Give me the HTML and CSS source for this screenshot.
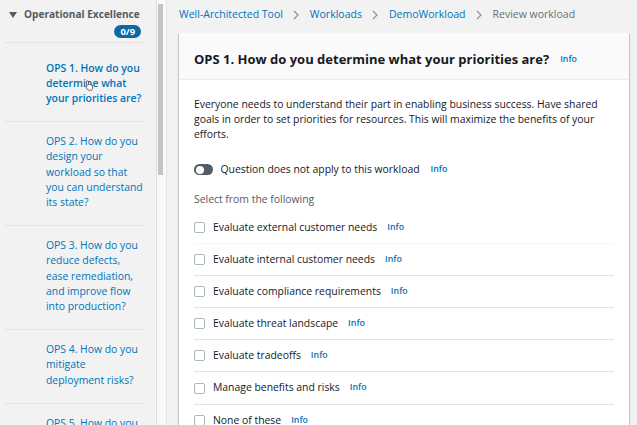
FILE: index.html
```html
<!DOCTYPE html>
<html lang="en">
<head>
<meta charset="utf-8">
<title>Review workload</title>
<link rel="stylesheet" href="styles.css">
</head>
<body>
<div class="app">
  <aside class="nav">
    <div class="nav-head">
      <div class="nav-title">
        <svg class="caret" width="8" height="6" viewBox="0 0 8 6"><polygon points="0,0 8,0 4,6" fill="#545b64"/></svg>
        <span>Operational Excellence</span>
      </div>
      <div class="badge-row"><span class="badge">0/9</span></div>
    </div>
    <a class="nav-item first active">OPS 1. How do you determine what your priorities are?
      <svg class="cursor" width="9" height="11" viewBox="0 0 9 11"><path d="M2.5 0.8 C3.2 0.8 3.5 1.2 3.5 1.8 V4.6 C3.9 4.3 4.6 4.4 4.9 4.8 C5.3 4.5 6 4.6 6.3 5.1 C6.8 4.9 7.6 5.2 7.6 5.9 V8 C7.6 9.4 6.8 10.3 5.4 10.3 H4.2 C3.3 10.3 2.8 9.9 2.3 9.2 L0.9 7.1 C0.6 6.6 0.8 6.1 1.3 6 C1.6 5.9 1.9 6.1 2.1 6.4 L1.5 1.8 C1.5 1.2 1.9 0.8 2.5 0.8 Z" fill="#fff" stroke="#222" stroke-width="0.7"/></svg>
    </a>
    <a class="nav-item">OPS 2. How do you design your workload so that you can understand its state?</a>
    <a class="nav-item">OPS 3. How do you reduce defects, ease remediation, and improve flow into production?</a>
    <a class="nav-item">OPS 4. How do you mitigate deployment risks?</a>
    <a class="nav-item">OPS 5. How do you prepare for operational events?</a>
  </aside>
  <div class="scrollbar"><div class="thumb"></div></div>
  <main class="main">
    <nav class="crumbs">
      <a class="crumb">Well-Architected Tool</a>
      <svg class="sep" width="6" height="10" viewBox="0 0 6 10"><polyline points="1,1 5,5 1,9" fill="none" stroke="#879596" stroke-width="1.2"/></svg>
      <a class="crumb">Workloads</a>
      <svg class="sep" width="6" height="10" viewBox="0 0 6 10"><polyline points="1,1 5,5 1,9" fill="none" stroke="#879596" stroke-width="1.2"/></svg>
      <a class="crumb">DemoWorkload</a>
      <svg class="sep" width="6" height="10" viewBox="0 0 6 10"><polyline points="1,1 5,5 1,9" fill="none" stroke="#879596" stroke-width="1.2"/></svg>
      <span class="crumb current">Review workload</span>
    </nav>
    <section class="card">
      <header class="card-head">
        <h1 class="card-title">OPS 1. How do you determine what your priorities are?</h1>
        <a class="info">Info</a>
      </header>
      <div class="card-body">
        <p class="desc">Everyone needs to understand their part in enabling business success. Have shared goals in order to set priorities for resources. This will maximize the benefits of your efforts.</p>
        <div class="toggle-row">
          <span class="toggle"><span class="knob"></span></span>
          <span class="toggle-label">Question does not apply to this workload</span>
          <a class="info">Info</a>
        </div>
        <div class="select-label">Select from the following</div>
        <ul class="options">
          <li class="option"><span class="box"></span><span class="opt-label">Evaluate external customer needs</span><a class="info">Info</a></li>
          <li class="option faint"><span class="box"></span><span class="opt-label">Evaluate internal customer needs</span><a class="info">Info</a></li>
          <li class="option"><span class="box"></span><span class="opt-label">Evaluate compliance requirements</span><a class="info">Info</a></li>
          <li class="option"><span class="box"></span><span class="opt-label">Evaluate threat landscape</span><a class="info">Info</a></li>
          <li class="option"><span class="box"></span><span class="opt-label">Evaluate tradeoffs</span><a class="info">Info</a></li>
          <li class="option"><span class="box"></span><span class="opt-label">Manage benefits and risks</span><a class="info">Info</a></li>
          <li class="option"><span class="box"></span><span class="opt-label">None of these</span><a class="info">Info</a></li>
        </ul>
      </div>
    </section>
  </main>
</div>
</body>
</html>
```
FILE: styles.css
```css
* { box-sizing: border-box; }
html, body { margin: 0; padding: 0; }
body {
  width: 637px;
  height: 425px;
  overflow: hidden;
  background: #f2f2f2;
  font-family: "Open Sans", "Noto Sans", sans-serif;
  font-size: 10.4px;
  color: #16191f;
}
a { text-decoration: none; }

.app { display: flex; height: 425px; overflow: hidden; }

.nav {
  width: 156px;
  flex: none;
  padding: 0 12px 0 4px;
  background: #f2f2f2;
}
.nav-head {
  padding: 7px 3px 4px 5px;
  border-bottom: 1px solid #e3e3e3;
}
.nav-title {
  display: flex;
  align-items: center;
  gap: 7px;
  line-height: 15px;
  font-weight: 700;
  font-size: 10.1px;
  color: #545b64;
  white-space: nowrap;
}
.caret { flex: none; }
.badge-row { display: flex; justify-content: flex-end; margin-top: 2.5px; }
.badge {
  height: 13px;
  line-height: 13px;
  padding: 0 6px;
  border-radius: 7px;
  background: #0a6aa6;
  color: #fff;
  font-weight: 700;
  font-size: 9.4px;
}
.nav-item {
  position: relative;
  display: block;
  padding: 12px 0 15px 42px;
  border-bottom: 1px solid #e3e3e3;
  color: #0073bb;
  font-size: 10.4px;
  line-height: 15.2px;
}
.nav-item.first { padding-top: 18px; }
.nav-item.active { font-weight: 600; }
.cursor { position: absolute; left: 81px; top: 37px; }

.scrollbar {
  width: 11px;
  flex: none;
  border-left: 1px solid #dedede;
  border-right: 1px solid #e6e6e6;
  background: #f8f8f8;
  padding: 4px 0 0 1px;
}
.thumb { width: 5px; height: 171px; background: #c4c4c4; }

.main { flex: 1; padding: 7px 8px 0 12px; min-width: 0; }

.crumbs {
  display: flex;
  align-items: center;
  line-height: 15px;
  height: 15px;
  white-space: nowrap;
  font-size: 10.5px;
}
.crumb { color: #0073bb; }
.crumb.current { color: #687078; }
.sep { margin: 0 10.5px; flex: none; }

.card {
  margin-top: 11px;
  background: #fff;
  box-shadow: 0 1px 1px 0 rgba(0,28,36,.3), 1px 1px 1px 0 rgba(0,28,36,.15), -1px 1px 1px 0 rgba(0,28,36,.15);
}
.card-head {
  display: flex;
  align-items: center;
  gap: 11px;
  padding: 16.5px 15px 11.5px 15px;
  background: #fafafa;
  border-bottom: 1px solid #eaeded;
}
.card-title {
  margin: 0;
  font-size: 13px;
  line-height: 18px;
  font-weight: 700;
  color: #16191f;
  white-space: nowrap;
}
.info {
  color: #0073bb;
  font-size: 8.8px;
  font-weight: 600;
}
.card-body { padding: 17px 15px 0 15px; }
.desc { margin: 0; line-height: 15.2px; }

.toggle-row {
  display: flex;
  align-items: center;
  margin-top: 19.5px;
  line-height: 15.2px;
}
.toggle {
  width: 18.5px;
  height: 11.5px;
  border-radius: 6px;
  background: #545b64;
  padding: 1.8px;
  flex: none;
  margin-right: 8px;
}
.knob { display: block; width: 8px; height: 8px; border-radius: 50%; background: #fff; }
.toggle-row .info { margin-left: 11px; }

.select-label {
  margin-top: 15px;
  line-height: 15.2px;
  color: #545b64;
}
.options { list-style: none; margin: 4.5px 0 0 0; padding: 0; }
.option {
  display: flex;
  align-items: center;
  padding: 8px 0;
  line-height: 15.1px;
  border-top: 1px solid #e1e4e4;
}
.option:first-child { border-top: none; }
.option.faint { border-top-color: #f5f6f6; }
.box {
  width: 11px;
  height: 11px;
  border: 1px solid #aab7b8;
  border-radius: 2px;
  background: #fff;
  flex: none;
  margin-right: 8px;
}
.option .info { margin-left: 10px; }
```
